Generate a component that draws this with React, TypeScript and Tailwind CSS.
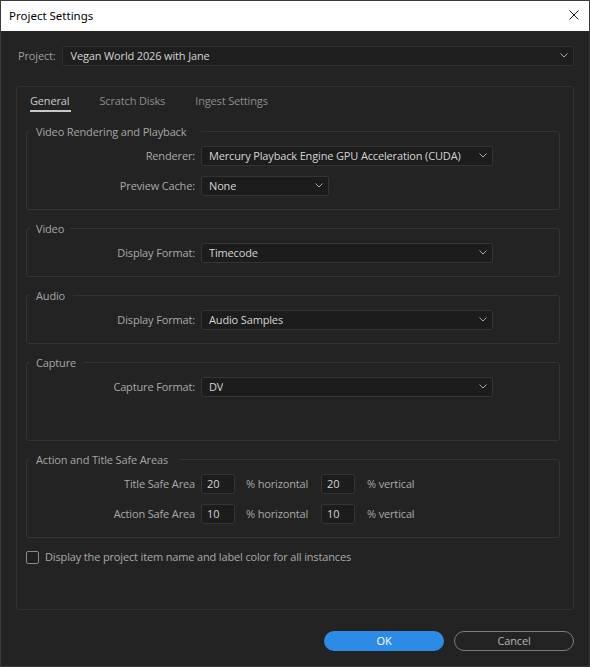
import React from "react";

const Chevron = () => (
  <svg width="8" height="5" viewBox="0 0 8 5" className="shrink-0">
    <path d="M0.5 0.5L4 4L7.5 0.5" fill="none" stroke="#a8a8a8" strokeWidth="1" />
  </svg>
);

function Dropdown({ value, width }: { value: string; width: string }) {
  return (
    <div
      className={`flex h-[20px] ${width} items-center justify-between rounded-[2px] border border-[#343434] bg-[#1c1c1c] pb-[1px] pl-[7px] pr-[5px] text-[#d4d4d4]`}
    >
      <span className="truncate">{value}</span>
      <Chevron />
    </div>
  );
}

function Group({
  title,
  legendPad,
  body,
  children,
}: {
  title: string;
  legendPad: string;
  body: string;
  children: React.ReactNode;
}) {
  return (
    <fieldset className={`rounded-[3px] border border-[#343434] ${body}`}>
      <legend className={`ml-[3px] pl-[6px] ${legendPad} leading-[15px] text-[#a6a6a6]`}>{title}</legend>
      {children}
    </fieldset>
  );
}

function Row({ label, children }: { label: string; children: React.ReactNode }) {
  return (
    <div className="flex h-[20px] items-center">
      <span className="w-[174px] shrink-0 pb-[1px] pr-[6px] text-right text-[#a9a9a9]">{label}</span>
      {children}
    </div>
  );
}

function NumInput({ value }: { value: string }) {
  return (
    <div className="flex h-[20px] w-[34px] items-center rounded-[2px] border border-[#343434] bg-[#1c1c1c] pb-[1px] pl-[5px] text-[#d4d4d4]">
      {value}
    </div>
  );
}

function SafeRow({ label, a, b }: { label: string; a: string; b: string }) {
  return (
    <Row label={label}>
      <NumInput value={a} />
      <span className="ml-[11px] w-[75px] pb-[1px] text-[#a9a9a9]">% horizontal</span>
      <NumInput value={b} />
      <span className="ml-[12px] pb-[1px] text-[#a9a9a9]">% vertical</span>
    </Row>
  );
}

export default function App() {
  return (
    <div className="flex h-[667px] w-[590px] flex-col border border-[#3a3a3a] bg-[#232323] text-[11px] leading-[15px] tracking-[-0.15px] [font-family:'Open_Sans',sans-serif]">
      {/* Title bar */}
      <div className="flex h-[30px] shrink-0 items-center justify-between bg-white pb-[2px] pl-[8px] pr-[10px]">
        <span className="text-[11.5px] tracking-normal text-black [font-family:'Noto_Sans',sans-serif]">
          Project Settings
        </span>
        <svg width="10" height="10" viewBox="0 0 10 10">
          <path d="M0.5 0.5L9.5 9.5M9.5 0.5L0.5 9.5" stroke="#1a1a1a" strokeWidth="1" />
        </svg>
      </div>

      <div className="flex flex-col px-[15px]">
        {/* Project row */}
        <div className="mt-[15px] flex items-center gap-[6px] pl-[2px]">
          <span className="pb-[1px] text-[#9f9f9f]">Project:</span>
          <div className="flex h-[20px] flex-1 items-center justify-between rounded-[2px] border border-[#303030] bg-[#1e1e1e] pb-[1px] pl-[8px] pr-[5px] text-[#d4d4d4]">
            <span>Vegan World 2026 with Jane</span>
            <Chevron />
          </div>
        </div>

        {/* Tab panel */}
        <div className="mt-[20px] flex h-[524px] flex-col rounded-[3px] border border-[#313131]">
          <div className="flex items-start pl-[13px] pt-[6px]">
            <span className="border-b-2 border-[#c8c8c8] pb-[2px] pr-[2px] text-[#cacaca]">General</span>
            <span className="ml-[28px] text-[#8d8d8d]">Scratch Disks</span>
            <span className="ml-[30px] text-[#8d8d8d]">Ingest Settings</span>
          </div>

          <div className="ml-[9px] mr-[13px] mt-[12px] flex flex-col gap-[11px]">
            <Group title="Video Rendering and Playback" legendPad="pr-[15px]" body="pb-[13px] pt-[7px]">
              <div className="flex flex-col gap-[10px]">
                <Row label="Renderer:">
                  <Dropdown value="Mercury Playback Engine GPU Acceleration (CUDA)" width="w-[292px]" />
                </Row>
                <Row label="Preview Cache:">
                  <Dropdown value="None" width="w-[128px]" />
                </Row>
              </div>
            </Group>

            <Group title="Video" legendPad="pr-[6px]" body="pb-[13px] pt-[7px]">
              <Row label="Display Format:">
                <Dropdown value="Timecode" width="w-[292px]" />
              </Row>
            </Group>

            <Group title="Audio" legendPad="pr-[8px]" body="pb-[13px] pt-[7px]">
              <Row label="Display Format:">
                <Dropdown value="Audio Samples" width="w-[292px]" />
              </Row>
            </Group>

            <Group title="Capture" legendPad="pr-[7px]" body="pb-[43px] pt-[7px]">
              <Row label="Capture Format:">
                <Dropdown value="DV" width="w-[292px]" />
              </Row>
            </Group>

            <Group title="Action and Title Safe Areas" legendPad="pr-[11px]" body="pb-[13px] pt-[7px]">
              <div className="flex flex-col gap-[10px]">
                <SafeRow label="Title Safe Area" a="20" b="20" />
                <SafeRow label="Action Safe Area" a="10" b="10" />
              </div>
            </Group>
          </div>

          <div className="ml-[9px] mt-[11px] flex items-center gap-[6px]">
            <div className="h-[13px] w-[13px] rounded-[2px] border border-[#8a8a8a] bg-[#1f1f1f]" />
            <span className="pb-[1px] text-[#a9a9a9]">Display the project item name and label color for all instances</span>
          </div>
        </div>

        {/* Buttons */}
        <div className="mt-[21px] flex justify-end gap-[10px]">
          <div className="flex h-[20px] w-[120px] items-center justify-center rounded-full bg-[#2d8be8] pb-[1px] text-white">
            OK
          </div>
          <div className="flex h-[20px] w-[120px] items-center justify-center rounded-full border border-[#7c7c7c] pb-[1px] text-[#b4b4b4]">
            Cancel
          </div>
        </div>
      </div>
    </div>
  );
}
